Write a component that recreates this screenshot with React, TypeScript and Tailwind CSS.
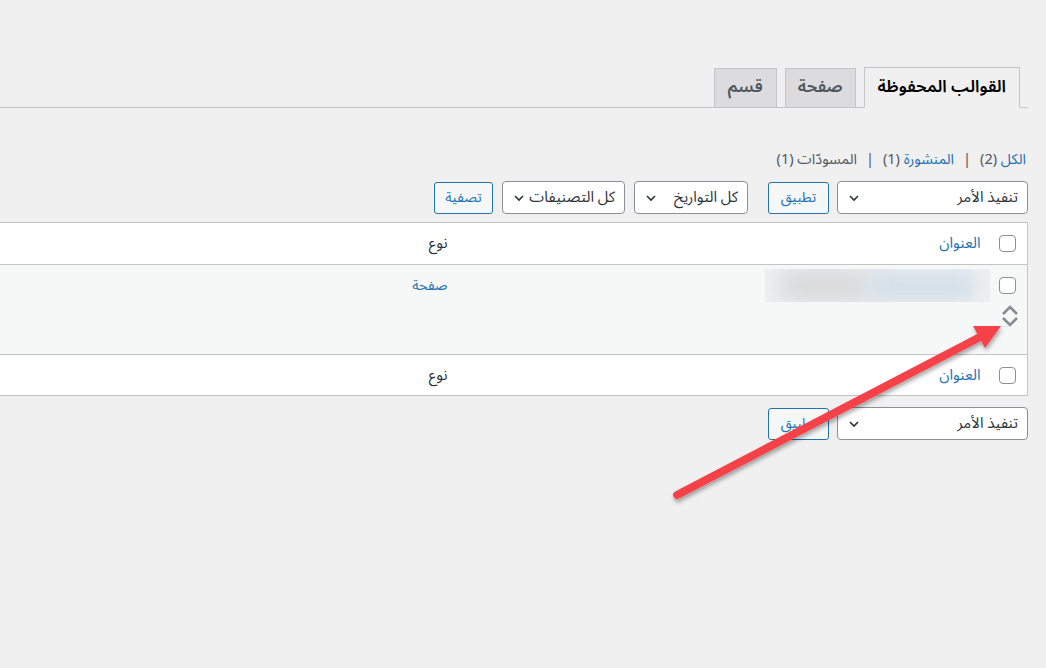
import React from "react";

const Chevron = () => (
  <svg width="12" height="12" viewBox="0 0 12 12" className="shrink-0">
    <path d="M2 4 L6 8 L10 4" fill="none" stroke="#2c3338" strokeWidth="1.6" />
  </svg>
);

const Select = ({ label, w }: { label: string; w: string }) => (
  <div
    className={`${w} shrink-0 h-[33px] flex items-center justify-between bg-white border border-[#8c8f94] rounded-[4px] pr-[9px] pl-[10px] text-[15px] text-[#2c3338] whitespace-nowrap`}
  >
    <span>{label}</span>
    <Chevron />
  </div>
);

const Btn = ({ label, w }: { label: string; w: string }) => (
  <div
    className={`${w} shrink-0 h-[32px] flex items-center justify-center bg-[#f6f7f7] border border-[#2271b1] rounded-[3px] text-[14px] text-[#2271b1] whitespace-nowrap`}
  >
    {label}
  </div>
);

const Check = () => (
  <div className="w-[17px] h-[17px] bg-white border border-[#8c8f94] rounded-[4px]" />
);

export default function App() {
  return (
    <div
      className="w-[1046px] h-[668px] overflow-hidden bg-[#f0f0f1] relative"
      style={{ fontFamily: 'Tahoma, "Noto Sans Arabic", "DejaVu Sans", sans-serif' }}
    >
      <div dir="rtl" className="mr-[18px] ml-[-40px] pt-[67px]">
        {/* Tabs */}
        <div className="flex items-end gap-[8px] pr-[8px] border-b border-[#c3c4c7] h-[41px]">
          <div className="h-[41px] -mb-px px-[13px] flex items-center bg-[#f0f0f1] border border-[#c3c4c7] border-b-[#f0f0f1] text-[17px] font-semibold text-black whitespace-nowrap">
            القوالب المحفوظة
          </div>
          <div className="h-[40px] -mb-px px-[12px] flex items-center bg-[#dcdcde] border border-[#c3c4c7] text-[17px] font-semibold text-[#50575e]">
            صفحة
          </div>
          <div className="h-[40px] -mb-px px-[13px] flex items-center bg-[#dcdcde] border border-[#c3c4c7] text-[17px] font-semibold text-[#50575e]">
            قسم
          </div>
        </div>

        {/* Status links */}
        <div className="mt-[42px] h-[20px] flex items-center pr-[2px] text-[14.5px] text-[#50575e] gap-[9px] whitespace-nowrap">
          <span>
            <span className="text-[#2271b1]">الكل</span> (2)
          </span>
          <span>|</span>
          <span>
            <span className="text-[#2271b1]">المنشورة</span> (1)
          </span>
          <span>|</span>
          <span>
            <span className="text-[#50575e]">المسودّات</span> (1)
          </span>
        </div>

        {/* Top tablenav */}
        <div className="mt-[11px] flex items-center">
          <Select label="تنفيذ الأمر" w="w-[191px]" />
          <div className="mr-[8px]">
            <Btn label="تطبيق" w="w-[61px]" />
          </div>
          <div className="mr-[20px]">
            <Select label="كل التواريخ" w="w-[114px]" />
          </div>
          <div className="mr-[9px]">
            <Select label="كل التصنيفات" w="w-[123px]" />
          </div>
          <div className="mr-[9px]">
            <Btn label="تصفية" w="w-[59px]" />
          </div>
        </div>

        {/* Table */}
        <table className="mt-[8px] w-full table-fixed border-collapse border border-[#c3c4c7] text-[15px]">
          <colgroup>
            <col className="w-[38px]" />
            <col className="w-[532px]" />
            <col />
          </colgroup>
          <thead>
            <tr className="h-[42px] bg-white border-b border-[#c3c4c7]">
              <td className="pr-[11px] align-middle">
                <Check />
              </td>
              <td className="pr-[9px] text-right align-middle text-[#2271b1]">العنوان</td>
              <td className="pr-[10px] text-right align-middle text-[#2c3338]">نوع</td>
            </tr>
          </thead>
          <tbody>
            <tr className="h-[90px] bg-[#f6f7f7] border-b border-[#c3c4c7]">
              <td className="pr-[11px] align-top pt-[12px]">
                <Check />
                <svg width="18" height="24" viewBox="0 0 18 24" className="mt-[11px] -mr-[3px]">
                  <path d="M2 9 L9 2 L16 9" fill="none" stroke="#858b92" strokeWidth="2.6" />
                  <path d="M2 13 L9 20 L16 13" fill="none" stroke="#858b92" strokeWidth="2.6" />
                </svg>
              </td>
              <td className="align-top pt-[4px]">
                <div className="relative w-[225px] h-[33px] overflow-hidden bg-[#eef0f2]">
                  <div className="absolute top-[2px] left-[15px] w-[90px] h-[30px] bg-[#d6d6d6] blur-[12px]" />
                  <div className="absolute top-[2px] left-[105px] w-[105px] h-[30px] bg-[#d3dfe9] blur-[10px]" />
                </div>
              </td>
              <td className="pr-[10px] align-top pt-[10px] text-right text-[14px] text-[#2271b1]">صفحة</td>
            </tr>
          </tbody>
          <tfoot>
            <tr className="h-[41px] bg-white">
              <td className="pr-[11px] align-middle">
                <Check />
              </td>
              <td className="pr-[9px] text-right align-middle text-[#2271b1]">العنوان</td>
              <td className="pr-[10px] text-right align-middle text-[#2c3338]">نوع</td>
            </tr>
          </tfoot>
        </table>

        {/* Bottom tablenav */}
        <div className="mt-[11px] flex items-center">
          <Select label="تنفيذ الأمر" w="w-[191px]" />
          <div className="mr-[8px]">
            <Btn label="تطبيق" w="w-[61px]" />
          </div>
        </div>
      </div>

      {/* Red annotation arrow */}
      <svg className="absolute inset-0 pointer-events-none" width="1046" height="668">
        <defs>
          <filter id="sh" x="-10%" y="-10%" width="120%" height="130%">
            <feDropShadow dx="1" dy="3" stdDeviation="2" floodColor="#000" floodOpacity="0.35" />
          </filter>
        </defs>
        <g filter="url(#sh)">
          <line x1="677" y1="495" x2="982" y2="336" stroke="#f5424a" strokeWidth="8" strokeLinecap="round" />
          <polygon points="1001,326 973,326 985,348" fill="#f5424a" />
        </g>
      </svg>
    </div>
  );
}
